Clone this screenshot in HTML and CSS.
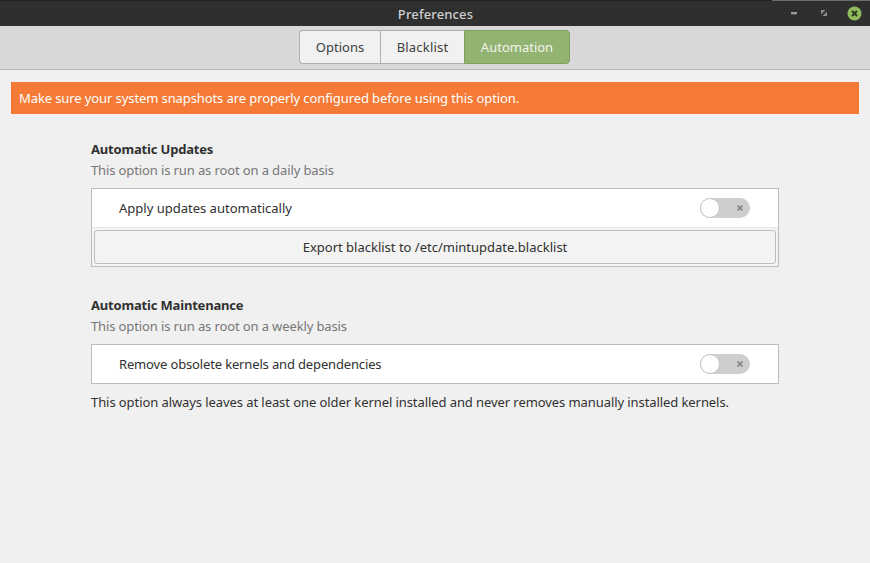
FILE: index.html
```html
<!DOCTYPE html>
<html lang="en">
<head>
<meta charset="utf-8">
<title>Preferences</title>
<link rel="stylesheet" href="styles.css">
</head>
<body>
<div class="window">
  <header class="titlebar">
    <span class="title">Preferences</span>
    <div class="controls">
      <svg class="ctl" width="16" height="16" viewBox="0 0 16 16"><rect x="4" y="7" width="6" height="2.4" fill="#9a9a9a"/></svg>
      <svg class="ctl" width="16" height="16" viewBox="0 0 16 16"><path d="M4 5 H8.5 L4 9.5 Z" fill="#8c8c8c"/><path d="M10 11 H5.5 L10 6.5 Z" fill="#8c8c8c"/></svg>
      <svg class="close" width="15" height="15" viewBox="0 0 15 15"><circle cx="7.5" cy="7.5" r="7" fill="#8fbb5e"/><path d="M5 5 L10 10 M10 5 L5 10" stroke="#2e3a22" stroke-width="2"/></svg>
    </div>
  </header>
  <nav class="toolbar">
    <div class="switcher">
      <button class="tab tab-options">Options</button>
      <button class="tab tab-blacklist">Blacklist</button>
      <button class="tab tab-active">Automation</button>
    </div>
  </nav>
  <main class="content">
    <div class="banner">Make sure your system snapshots are properly configured before using this option.</div>
    <section class="group group-first">
      <h2 class="heading">Automatic Updates</h2>
      <p class="sub">This option is run as root on a daily basis</p>
      <div class="box">
        <div class="row">
          <span>Apply updates automatically</span>
          <span class="toggle"><span class="knob"></span><svg class="x" width="8" height="8" viewBox="0 0 8 8"><path d="M1.5 1.5 L6.5 6.5 M6.5 1.5 L1.5 6.5" stroke="#808080" stroke-width="1.6"/></svg></span>
        </div>
        <div class="btnrow"><button class="export">Export blacklist to /etc/mintupdate.blacklist</button></div>
      </div>
    </section>
    <section class="group group-second">
      <h2 class="heading">Automatic Maintenance</h2>
      <p class="sub">This option is run as root on a weekly basis</p>
      <div class="box">
        <div class="row">
          <span class="tight">Remove obsolete kernels and dependencies</span>
          <span class="toggle"><span class="knob"></span><svg class="x" width="8" height="8" viewBox="0 0 8 8"><path d="M1.5 1.5 L6.5 6.5 M6.5 1.5 L1.5 6.5" stroke="#808080" stroke-width="1.6"/></svg></span>
        </div>
      </div>
      <p class="note">This option always leaves at least one older kernel installed and never removes manually installed kernels.</p>
    </section>
  </main>
</div>
</body>
</html>
```
FILE: styles.css
```css
* { box-sizing: border-box; }
html, body { margin: 0; padding: 0; }
body {
  width: 870px; height: 563px; overflow: hidden;
  font-family: "Noto Sans", "Open Sans", sans-serif;
  font-size: 13px; color: #303030; background: #f0f0f0;
}
.window { display: flex; flex-direction: column; height: 563px; }
.titlebar {
  height: 26px; flex: none; background: #2f2f2f;
  border-top: 1px solid #222;
  display: flex; align-items: center; justify-content: center;
  position: relative; color: #cfcfcf;
}
.titlebar::before {
  content: ""; position: absolute; left: 772px; right: 0; top: -1px; height: 1px;
  background: #6e6e6e;
}
.title { font-weight: 500; letter-spacing: 0.15px; padding-left: 1px; }
.controls { position: absolute; right: 8px; top: 4px; display: flex; align-items: center; gap: 14px; }
.toolbar {
  height: 44px; flex: none; background: #d8d8d8;
  border-bottom: 1px solid #b9b9b9;
  display: flex; justify-content: center; padding: 4px 1px 0 0;
}
.switcher { display: flex; height: 34px; }
.tab {
  font: inherit; margin: 0; height: 34px; color: #404040;
  background: #f1f1f1; border: 1px solid #b0b0b0; border-right: 0;
}
.tab-options { width: 81px; border-radius: 4px 0 0 4px; }
.tab-blacklist { width: 84px; letter-spacing: 0.2px; }
.tab-active {
  width: 106px; color: #f0f5ea; background: #93b373;
  border: 1px solid #7f9f60; border-radius: 0 4px 4px 0;
}
.content { flex: 1; padding: 12px 11px 0; }
.banner {
  height: 32px; background: #f47a35; color: #fff;
  padding-left: 8px; line-height: 32px; letter-spacing: -0.1px;
}
.group { margin: 0 80px; width: 688px; }
.group-first { padding-top: 25px; }
.group-second { padding-top: 28px; }
.heading { margin: 0; font-size: 13px; font-weight: 700; line-height: 20px; color: #303030; letter-spacing: -0.18px; }
.sub { margin: 1px 0 8px; line-height: 20px; color: #777; letter-spacing: -0.12px; }
.box { background: #fff; border: 1px solid #bdbdbd; }
.row {
  height: 38px; display: flex; align-items: center; justify-content: space-between;
  padding: 0 28px 0 27px;
}
.tight { letter-spacing: -0.15px; }
.toggle {
  width: 50px; height: 20px; border-radius: 10px; background: #cecece;
  display: flex; align-items: center; justify-content: space-between;
  padding-right: 6px;
}
.knob { width: 20px; height: 20px; border-radius: 50%; background: #fff; border: 1px solid #c4c4c4; }
.x { display: block; }
.btnrow { border-top: 1px solid #e6e6e6; background: #f4f4f4; padding: 2px; height: 39px; }
.export {
  display: block; width: 100%; height: 34px; margin: 0; font: inherit; color: #303030;
  background: #f3f3f3; border: 1px solid #bdbdbd; border-radius: 3px;
}
.note { margin: 8px 0 0; line-height: 20px; color: #303030; letter-spacing: -0.08px; }
```
